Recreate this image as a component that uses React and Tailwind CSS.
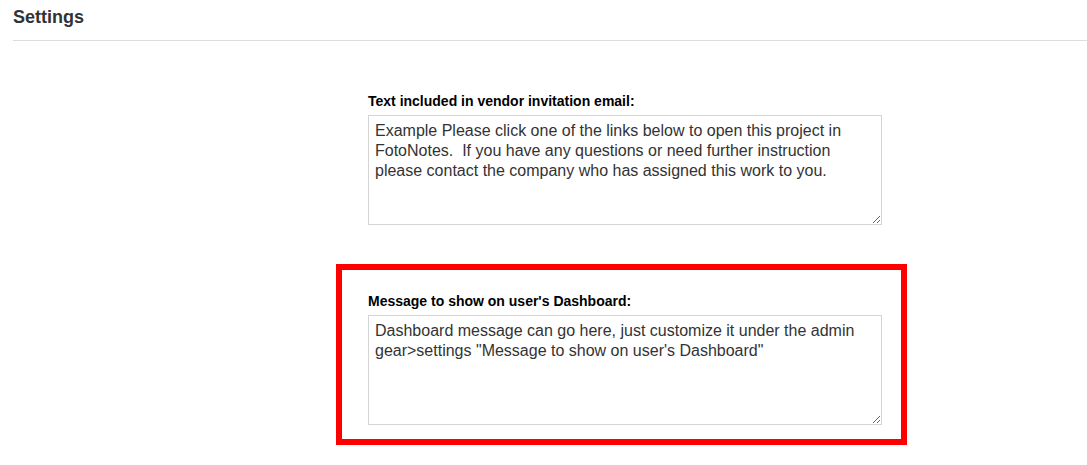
import React from 'react';

const fieldText = {
  vendor:
    'Example Please click one of the links below to open this project in FotoNotes.  If you have any questions or need further instruction please contact the company who has assigned this work to you.',
  dashboard:
    'Dashboard message can go here, just customize it under the admin gear>settings "Message to show on user\'s Dashboard"',
};

function SettingField({ label, value, highlight }) {
  return (
    <div className="relative w-[514px]">
      {/* annotation box drawn over the field */}
      {highlight && (
        <div className="pointer-events-none absolute -left-[32px] -right-[25px] -top-[29px] -bottom-[20px] border-[6px] border-[#ff0000]"></div>
      )}
      <label className="block text-[14px] leading-[17px] font-bold text-black mb-[5px]">{label}</label>
      <textarea
        defaultValue={value}
        className="block w-[514px] h-[110px] border border-[#d4d4d4] bg-white px-[6px] py-[5px] text-[16px] leading-[20px] text-[#333] outline-none"
        style={{ fontFamily: '"Liberation Sans", Arial, sans-serif' }}
      />
    </div>
  );
}

export default function App() {
  return (
    <div className="min-h-[465px] bg-white pl-[13px] pt-[7px] font-['Liberation_Sans',Arial,sans-serif]">
      <h2 className="text-[18px] leading-[20px] font-bold text-[#333]">Settings</h2>
      <div className="mt-[13px] border-t border-[#dddddd]"></div>

      <div className="ml-[355px] mt-[52px] flex flex-col gap-[68px]">
        <SettingField label="Text included in vendor invitation email:" value={fieldText.vendor} />
        <SettingField label="Message to show on user's Dashboard:" value={fieldText.dashboard} highlight />
      </div>
    </div>
  );
}
